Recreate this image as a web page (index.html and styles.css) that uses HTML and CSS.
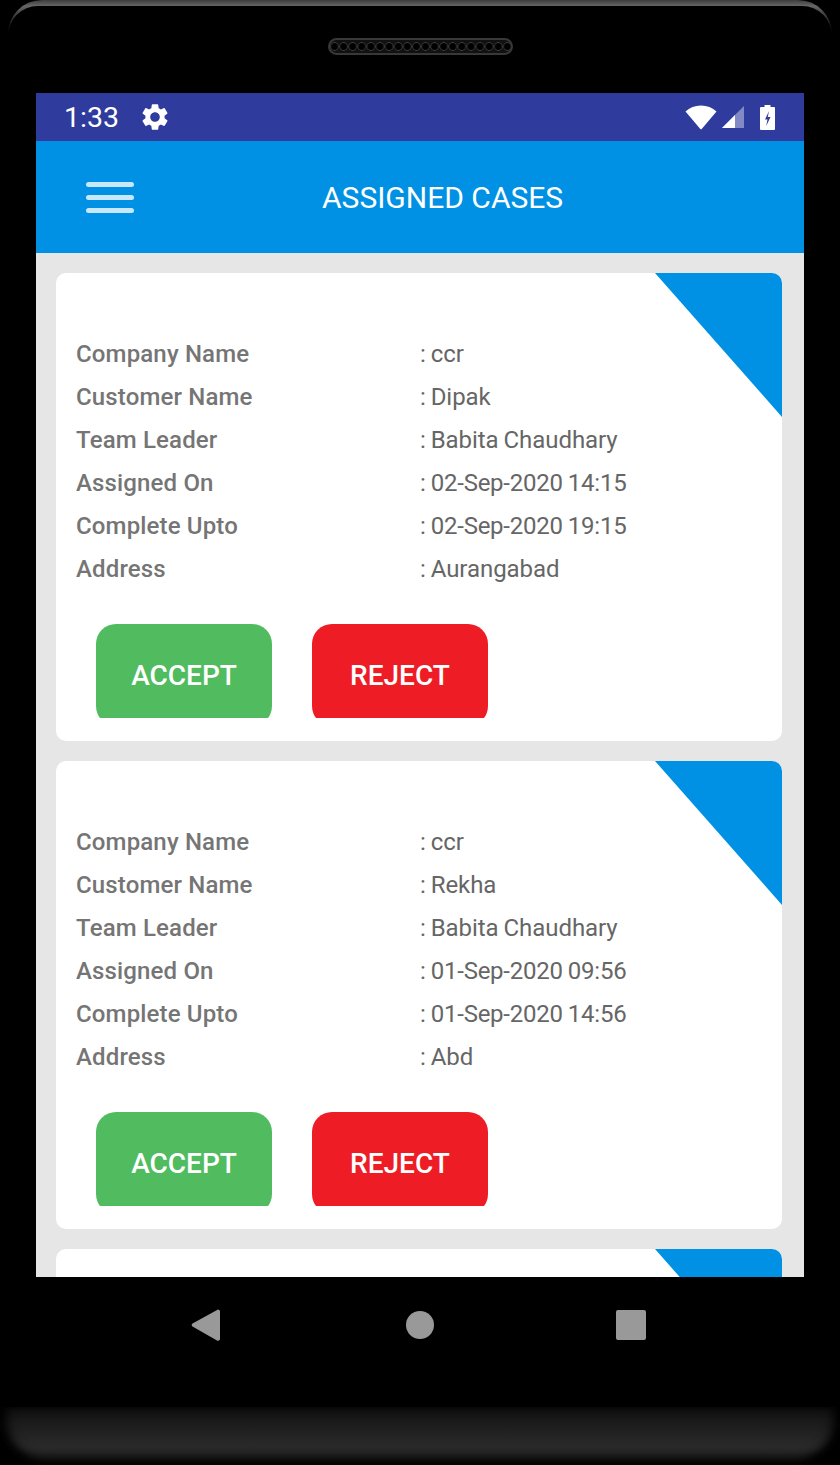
FILE: index.html
```html
<!DOCTYPE html>
<html lang="en">

<head>
    <meta charset="UTF-8">
    <meta name="viewport" content="width=device-width, initial-scale=1.0">
    <title>Assigned Cases</title>
    <link rel="stylesheet" href="styles.css">
</head>

<body>
    <div class="device">
        <div class="bezel-top">
            <div class="rim"></div>
            <div class="speaker"></div>
        </div>

        <div class="screen">
            <div class="status-bar">
                <span class="time">1:33</span>
                <svg class="gear" viewBox="0 0 24 24">
                    <path fill="#fff" d="M19.14,12.94c0.04-0.3,0.06-0.61,0.06-0.94c0-0.32-0.02-0.64-0.07-0.94l2.03-1.58c0.18-0.14,0.23-0.41,0.12-0.61l-1.92-3.32c-0.12-0.22-0.37-0.29-0.59-0.22l-2.39,0.96c-0.5-0.38-1.03-0.7-1.62-0.94L14.4,2.81c-0.04-0.24-0.24-0.41-0.48-0.41h-3.84c-0.24,0-0.43,0.17-0.47,0.41L9.25,5.35C8.66,5.59,8.12,5.92,7.63,6.29L5.24,5.33c-0.22-0.08-0.47,0-0.59,0.22L2.74,8.87C2.62,9.08,2.66,9.34,2.86,9.48l2.03,1.58C4.84,11.36,4.8,11.69,4.8,12s0.02,0.64,0.07,0.94l-2.03,1.58c-0.18,0.14-0.23,0.41-0.12,0.61l1.92,3.32c0.12,0.22,0.37,0.29,0.59,0.22l2.39-0.96c0.5,0.38,1.03,0.7,1.62,0.94l0.36,2.54c0.05,0.24,0.24,0.41,0.48,0.41h3.84c0.24,0,0.44-0.17,0.47-0.41l0.36-2.54c0.59-0.24,1.13-0.56,1.62-0.94l2.39,0.96c0.22,0.08,0.47,0,0.59-0.22l1.92-3.32c0.12-0.22,0.07-0.47-0.12-0.61L19.14,12.94z M12,15.6c-1.98,0-3.6-1.62-3.6-3.6s1.62-3.6,3.6-3.6s3.6,1.62,3.6,3.6S13.98,15.6,12,15.6z" />
                </svg>
                <svg class="wifi" viewBox="0 0 32 25">
                    <path fill="#fff" d="M0.5 6.5C4.5 2.6 10 0.5 16 0.5s11.5 2.100 15.500 6L16.900 23.800a1.200 1.200 0 0 1-1.800 0z" />
                </svg>
                <svg class="signal" viewBox="0 0 22 22">
                    <path fill="#fff" fill-opacity="0.4" d="M22 0V22H0z" />
                    <path fill="#fff" d="M13 9V22H0z" />
                </svg>
                <svg class="battery" viewBox="0 0 15 25">
                    <path fill="#fff" d="M4.500 0h6v2H14a1 1 0 0 1 1 1v21a1 1 0 0 1-1 1H1a1 1 0 0 1-1-1V3a1 1 0 0 1 1-1h3.500z" />
                    <path fill="#303b9e" d="M9 6L5 14.500h2.500L6.200 21l4.300-9H7.800z" />
                </svg>
            </div>

            <div class="app-bar">
                <div class="hamburger">
                    <span></span>
                    <span></span>
                    <span></span>
                </div>
                <h1>ASSIGNED CASES</h1>
            </div>

            <div class="list">
                <div class="card">
                    <div class="corner"></div>
                    <div class="rows">
                        <span class="label">Company Name</span><span class="value">: ccr</span>
                        <span class="label">Customer Name</span><span class="value">: Dipak</span>
                        <span class="label">Team Leader</span><span class="value">: Babita Chaudhary</span>
                        <span class="label">Assigned On</span><span class="value date">: 02-Sep-2020 14:15</span>
                        <span class="label">Complete Upto</span><span class="value date">: 02-Sep-2020 19:15</span>
                        <span class="label">Address</span><span class="value">: Aurangabad</span>
                    </div>
                    <div class="actions">
                        <div class="btn-clip"><button class="btn btn-accept" type="button">ACCEPT</button></div>
                        <div class="btn-clip"><button class="btn btn-reject" type="button">REJECT</button></div>
                    </div>
                </div>

                <div class="card">
                    <div class="corner"></div>
                    <div class="rows">
                        <span class="label">Company Name</span><span class="value">: ccr</span>
                        <span class="label">Customer Name</span><span class="value">: Rekha</span>
                        <span class="label">Team Leader</span><span class="value">: Babita Chaudhary</span>
                        <span class="label">Assigned On</span><span class="value date">: 01-Sep-2020 09:56</span>
                        <span class="label">Complete Upto</span><span class="value date">: 01-Sep-2020 14:56</span>
                        <span class="label">Address</span><span class="value">: Abd</span>
                    </div>
                    <div class="actions">
                        <div class="btn-clip"><button class="btn btn-accept" type="button">ACCEPT</button></div>
                        <div class="btn-clip"><button class="btn btn-reject" type="button">REJECT</button></div>
                    </div>
                </div>

                <div class="card">
                    <div class="corner"></div>
                </div>
            </div>
        </div>

        <div class="nav-bar">
            <svg class="nav-icon" viewBox="0 0 30 34">
                <path fill="#999" d="M27 1.500a2 2 0 0 1 2 1.500V31a2 2 0 0 1-3 1.500L1.500 18.500a2 2 0 0 1 0-3z" />
            </svg>
            <svg class="nav-icon nav-home" viewBox="0 0 30 34">
                <circle fill="#999" cx="15" cy="17" r="14" />
            </svg>
            <svg class="nav-icon nav-recent" viewBox="0 0 30 34">
                <rect fill="#999" x="0" y="2" width="30" height="30" rx="2" />
            </svg>
        </div>

        <div class="bezel-bottom"></div>
    </div>
</body>

</html>
```

FILE: styles.css
```css
* {
    padding: 0;
    margin: 0;
    box-sizing: border-box;
    font-family: Roboto, Arial, sans-serif;
}

body {
    background-color: #000;
}

.device {
    width: 840px;
    height: 1465px;
    display: flex;
    flex-direction: column;
    background-color: #000;
    overflow: hidden;
}

.bezel-top {
    height: 93px;
    flex: none;
    padding: 0 8px;
}

.rim {
    height: 36px;
    padding-top: 6px;
    border-radius: 34px 34px 0 0;
    overflow: hidden;
    background-image: linear-gradient(#3c3c3c, #666 6px, #333 18px, #000 34px);
    filter: blur(0.5px);
}

.rim::after {
    content: "";
    display: block;
    height: 100%;
    background-color: #000;
    border-radius: 30px 30px 0 0;
}

.speaker {
    width: 185px;
    height: 17px;
    margin: 2px auto 0;
    border: 2px solid #383838;
    border-radius: 9px;
    background-color: #111;
    background-image: radial-gradient(circle at center, #000 3px, #3c3c3c 4px, #111 4.6px);
    background-size: 9.1px 13px;
    background-position: 0 0;
    filter: blur(0.4px);
}

.screen {
    height: 1184px;
    flex: none;
    margin: 0 36px;
    display: flex;
    flex-direction: column;
    overflow: hidden;
    background-color: #e6e6e6;
}

.status-bar {
    height: 48px;
    flex: none;
    display: flex;
    align-items: center;
    padding-left: 28px;
    background-color: #303b9e;
    color: #fff;
}

.time {
    font-size: 28.5px;
    width: 75px;
}

.gear {
    width: 32px;
    height: 32px;
}

.wifi {
    width: 32px;
    height: 25px;
    margin-left: 514px;
}

.signal {
    width: 22px;
    height: 22px;
    margin-left: 5px;
}

.battery {
    width: 15px;
    height: 25px;
    margin-left: 16px;
}

.app-bar {
    height: 112px;
    flex: none;
    display: flex;
    align-items: center;
    padding-left: 50px;
    background-color: #0091e4;
}

.hamburger {
    width: 48px;
    display: flex;
    flex-direction: column;
    gap: 8px;

    span {
        height: 5px;
        display: block;
        border-radius: 2.5px;
        background-color: #c6e8fa;
    }
}

.app-bar h1 {
    margin-left: 188px;
    font-size: 30px;
    font-weight: 400;
    color: #fff;
}

.list {
    display: flex;
    flex-direction: column;
    gap: 20px;
    padding: 20px 22px 0 20px;
}

.card {
    position: relative;
    flex: none;
    min-height: 468px;
    padding: 60px 20px 23px;
    border-radius: 10px;
    overflow: hidden;
    background-color: #fff;
}

.corner {
    position: absolute;
    top: 0;
    right: 0;
    width: 127px;
    height: 144px;
    background-color: #0091e4;
    clip-path: polygon(0 0, 100% 0, 100% 100%);
}

.rows {
    display: grid;
    grid-template-columns: 344px 1fr;
    line-height: 43px;
    font-size: 24px;
}

.label {
    font-weight: 500;
    letter-spacing: 0.15px;
    color: #757575;
}

.value {
    color: #666;
    word-spacing: -1px;
    letter-spacing: -0.05px;
}

.date {
    word-spacing: -0.5px;
    letter-spacing: -0.25px;
}

.actions {
    display: flex;
    gap: 40px;
    margin-top: 33px;
    padding-left: 20px;
}

.btn-clip {
    width: 176px;
    height: 94px;
    overflow: hidden;
}

.btn {
    width: 100%;
    height: 102px;
    border: none;
    border-radius: 20px;
    font-size: 28px;
    font-weight: 500;
    color: #fff;
}

.btn-accept {
    background-color: #50bb5f;
}

.btn-reject {
    background-color: #ee1c25;
}

.nav-bar {
    height: 130px;
    flex: none;
    display: flex;
    align-items: flex-start;
    padding: 31px 0 0 191px;
}

.nav-icon {
    width: 30px;
    height: 34px;
}

.nav-home {
    margin-left: 184px;
}

.nav-recent {
    margin-left: 181px;
}

.bezel-bottom {
    flex: 1;
    border-radius: 0 0 44px 44px;
    background-image: linear-gradient(#111, #2a2a2a 68%, #222);
    box-shadow: inset 9px 0 12px -3px #000, inset -9px 0 12px -3px #000, inset 0 -9px 12px -3px #000;
}
```
